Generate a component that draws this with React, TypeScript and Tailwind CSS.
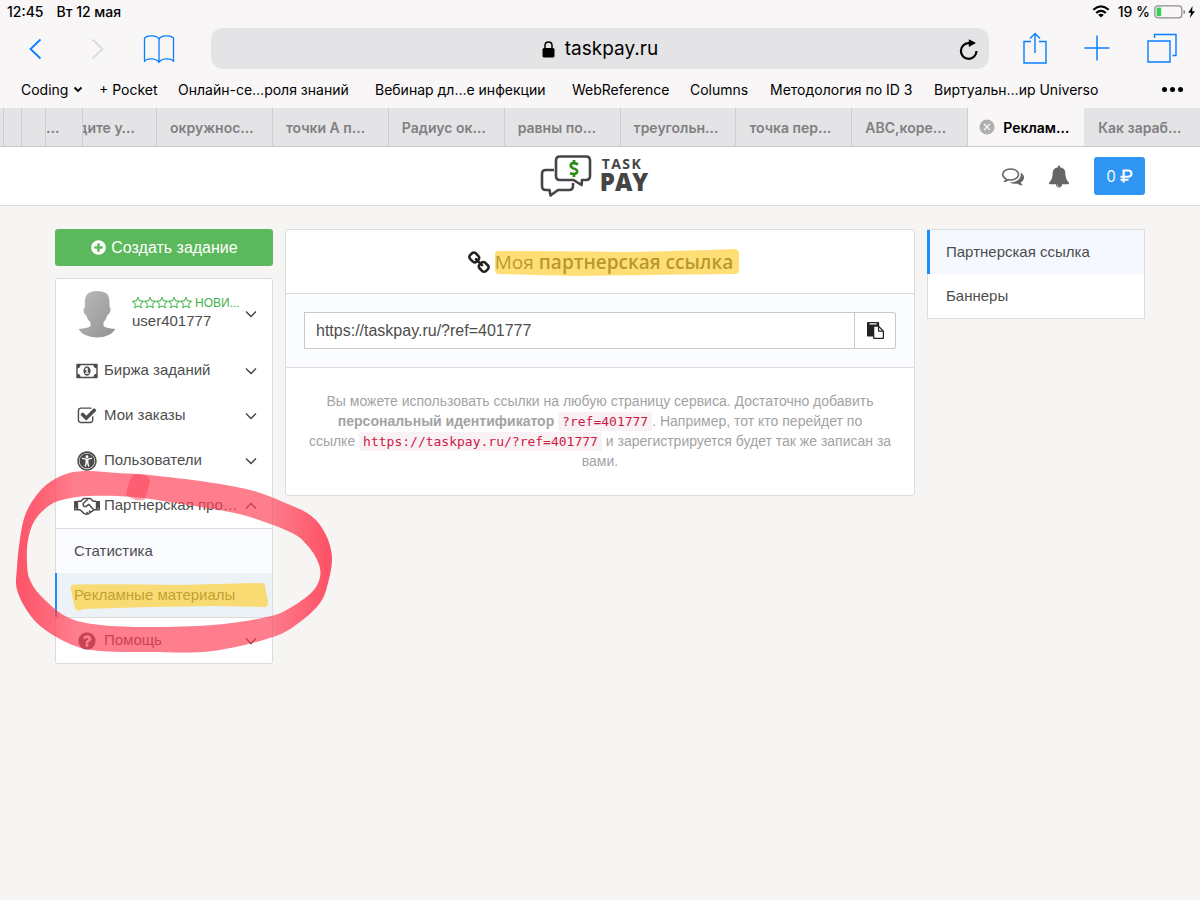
import type { ReactNode } from "react";
import { FaUniversalAccess } from "react-icons/fa";

const ICONS = {
  plus: "M1344 960v-128q0-26-19-45t-45-19h-256v-256q0-26-19-45t-45-19h-128q-26 0-45 19t-19 45v256h-256q-26 0-45 19t-19 45v128q0 26 19 45t45 19h256v256q0 26 19 45t45 19h128q26 0 45-19t19-45v-256h256q26 0 45-19t19-45zm320-64q0 209-103 385.5t-279.5 279.5-385.5 103-385.5-103-279.5-279.5-103-385.5 103-385.5 279.5-279.5 385.5-103 385.5 103 279.5 279.5 103 385.5z",
  star: "M1201 1004l306-297-422-62-189-382-189 382-422 62 306 297-73 421 378-199 377 199zm527-357q0 22-26 48l-363 354 86 500q1 7 1 20 0 50-41 50-19 0-40-12l-449-236-449 236q-22 12-40 12-21 0-31.5-14.5t-10.5-35.5q0-6 2-20l86-500-364-354q-25-27-25-48 0-37 56-46l502-73 225-455q19-41 49-41t49 41l225 455 502 73q56 9 56 46z",
  check: "M1472 930v318q0 119-84.5 203.5t-203.5 84.5h-832q-119 0-203.5-84.5t-84.5-203.5v-832q0-119 84.5-203.5t203.5-84.5h832q63 0 117 25 15 7 18 23 3 17-9 29l-49 49q-10 10-23 10-3 0-9-2-23-6-45-6h-832q-66 0-113 47t-47 113v832q0 66 47 113t113 47h832q66 0 113-47t47-113v-254q0-13 9-22l64-64q10-10 23-10 6 0 12 3 20 8 20 29zm231-489l-814 814q-24 24-57 24t-57-24l-430-430q-24-24-24-57t24-57l110-110q24-24 57-24t57 24l263 263 647-647q24-24 57-24t57 24l110 110q24 24 24 57t-24 57z",
  money: "M768 1152h384v-96h-128v-448h-114l-148 137 77 80q42-37 55-57h2v288h-128v96zm512-256q0 70-21 142t-59.5 134-101.5 101-138 39-138-39-101.5-101-59.5-134-21-142 21-142 59.5-134 101.5-101 138-39 138 39 101.5 101 59.5 134 21 142zm512 256v-512q-106 0-181-75t-75-181h-1152q0 106-75 181t-181 75v512q106 0 181 75t75 181h1152q0-106 75-181t181-75zm128-832v1152q0 26-19 45t-45 19h-1792q-26 0-45-19t-19-45v-1152q0-26 19-45t45-19h1792q26 0 45 19t19 45z",
  question: "M1024 1376v-192q0-14-9-23t-23-9h-192q-14 0-23 9t-9 23v192q0 14 9 23t23 9h192q14 0 23-9t9-23zm256-672q0-88-55.5-163t-138.5-116-170-41q-243 0-371 213-15 24 8 42l132 100q7 6 19 6 16 0 25-12 53-68 86-92 34-24 86-24 48 0 85.5 26t37.5 59q0 38-20 61t-68 45q-63 28-115.5 86.5t-52.5 125.5v36q0 14 9 23t23 9h192q14 0 23-9t9-23q0-19 21.5-49.5t54.5-49.5q32-18 49-28.5t46-35 44.5-48 28-60.5 12.5-81zm384 192q0 209-103 385.5t-279.5 279.5-385.5 103-385.5-103-279.5-279.5-103-385.5 103-385.5 279.5-279.5 385.5-103 385.5 103 279.5 279.5 103 385.5z",
  bell: "M912 1696q0-16-16-16-59 0-101.5-42.5t-42.5-101.5q0-16-16-16t-16 16q0 73 51.5 124.5t124.5 51.5q16 0 16-16zm816-288q0 52-38 90t-90 38h-448q0 106-75 181t-181 75-181-75-75-181h-448q-52 0-90-38t-38-90q50-42 91-88t85-119.5 74.5-158.5 50-206 19.5-260q0-152 117-282.5t307-158.5q-8-19-8-39 0-40 28-68t68-28 68 28 28 68q0 20-8 39 190 28 307 158.5t117 282.5q0 139 19.5 260t50 206 74.5 158.5 85 119.5 91 88z",
  comments: "M704 384q-153 0-286 52t-211.5 141-78.5 191q0 82 53 158t149 132l97 56-35 84q34-20 62-39l44-31 53 10q78 14 153 14 153 0 286-52t211.5-141 78.5-191-78.5-191-211.5-141-286-52zm0-128q191 0 353.5 68.5t256.5 186.5 94 257-94 257-256.5 186.5-353.5 68.5q-86 0-176-16-124 88-278 128-36 9-86 16h-3q-11 0-20.5-8t-11.5-21q-1-3-1-6.5t.5-6.5 2-6l2.5-5 3.5-5.5 4-5 4.5-5 4-4.5q5-6 23-25t26-29.5 22.5-29 25-38.5 20.5-44q-124-72-195-177t-71-224q0-139 94-257t256.5-186.5 353.5-68.5zm822 1169q10 24 20.5 44t25 38.5 22.5 29 26 29.5 23 25q1 1 4 4.5t4.5 5 4 5 3.5 5.5l2.5 5 2 6 .5 6.5-1 6.5q-3 14-13 22t-22 7q-50-7-86-16-154-40-278-128-90 16-176 16-271 0-472-132 58 4 88 4 161 0 309-45t264-129q125-92 192-212t67-254q0-77-23-152 129 71 204 178t75 230q0 120-71 224.5t-195 176.5z",
  link: "M1520 1216q0-40-28-68l-208-208q-28-28-68-28-42 0-72 32 3 3 19 18.5t21.5 21.5 15 19 13 25.5 3.5 27.5q0 40-28 68t-68 28q-15 0-27.5-3.5t-25.5-13-19-15-21.5-21.5-18.5-19q-33 31-33 73 0 40 28 68l206 207q27 27 68 27 40 0 68-26l147-146q28-28 28-67zm-703-705q0-40-28-68l-206-207q-28-28-68-28-39 0-68 27l-147 146q-28 28-28 67 0 40 28 68l208 208q27 27 68 27 42 0 72-31-3-3-19-18.5t-21.5-21.5-15-19-13-25.5-3.5-27.5q0-40 28-68t68-28q15 0 27.5 3.5t25.5 13 19 15 21.5 21.5 18.5 19q33-31 33-73zm895 705q0 120-85 203l-147 146q-83 83-203 83-121 0-204-85l-206-207q-83-83-83-203 0-123 88-209l-88-88q-86 88-208 88-120 0-204-84l-208-208q-84-84-84-204t85-203l147-146q83-83 203-83 121 0 204 85l206 207q83 83 83 203 0 123-88 209l88 88q86-88 208-88 120 0 204 84l208 208q84 84 84 204z",
  paste: "M768 1664h896v-640h-416q-40 0-68-28t-28-68v-416h-384v1152zm256-1440v-64q0-13-9.5-22.5t-22.5-9.5h-704q-13 0-22.5 9.5t-9.5 22.5v64q0 13 9.5 22.5t22.5 9.5h704q13 0 22.5-9.5t9.5-22.5zm256 672h299l-299-299v299zm512 128v672q0 40-28 68t-68 28h-960q-40 0-68-28t-28-68v-160h-544q-40 0-68-28t-28-68v-1344q0-40 28-68t68-28h1088q40 0 68 28t28 68v328q21 13 36 28l408 408q28 28 48 76t20 88z",
};

function Icon({ name, className, box = "0 0 1792 1792" }: { name: keyof typeof ICONS; className?: string; box?: string }) {
  return (
    <svg viewBox={box} fill="currentColor" className={className} aria-hidden="true">
      <path d={ICONS[name]} />
    </svg>
  );
}

function Handshake() {
  return (
    <svg viewBox="0 0 26 18" className="h-[18px] w-[26px]" fill="none" stroke="currentColor" strokeWidth="1.5" strokeLinejoin="round" aria-hidden="true">
      <path d="M0 4H4.200V13.500H0ZM21.800 4H26V13.500H21.800Z" fill="currentColor" stroke="none" />
      <path d="M4 4.300H7L9.500 1.500H16.500L19.200 4.300H22M4 12.800H6L10 16.400Q12 17.800 14.200 16.800L20 12.800H22" />
      <path d="M14 2 9.200 6.500Q8.800 9.800 11.800 9.600L14.800 7.300 19.500 12.600M13.800 16.600 12.500 15M16.500 15.300 15 13.500" />
      <path d="M1.300 11.700H2.300M23.700 11.700H24.700" stroke="#fff" strokeWidth="1" />
    </svg>
  );
}

function Ruble() {
  return (
    <svg viewBox="0 0 13 14" className="h-[14px] w-[13px]" fill="none" stroke="currentColor" strokeWidth="2.1" aria-label="₽" role="img">
      <path d="M3.600 13.500V1.500H8.200Q11.500 1.500 11.500 4.600T8.200 7.700H.5M.5 10.700H8.500" />
    </svg>
  );
}

function Chevron({ up = false }: { up?: boolean }) {
  return (
    <svg viewBox="0 0 12 8" className="h-2 w-3 shrink-0" fill="none" stroke="#444" strokeWidth="1.4" aria-hidden="true">
      <path d={up ? "M1 6.5 6 1.5 11 6.5" : "M1 1.5 6 6.5 11 1.5"} />
    </svg>
  );
}

/* Closed smooth curve through the given points. */
function smooth(p: number[][]) {
  const n = p.length;
  let d = `M${p[0][0]} ${p[0][1]}`;
  for (let i = 0; i < n; i++) {
    const a = p[(i - 1 + n) % n];
    const b = p[i];
    const c = p[(i + 1) % n];
    const e = p[(i + 2) % n];
    d += `C${b[0] + (c[0] - a[0]) / 6} ${b[1] + (c[1] - a[1]) / 6} ${c[0] - (e[0] - b[0]) / 6} ${c[1] - (e[1] - b[1]) / 6} ${c[0]} ${c[1]}`;
  }
  return d + "Z";
}

const OUTER = [[87, 471], [118, 473], [150, 475], [207, 482], [250, 490], [283, 502], [310, 515], [325, 533], [332, 557], [328, 583], [320, 603], [300, 622], [273, 637], [213, 651], [150, 652], [100, 651], [70, 644], [37, 623], [18, 593], [17, 567], [22, 527], [30, 505], [46, 485], [66, 474]];
const INNER = [[87, 496], [118, 496], [150, 499], [200, 507], [243, 515], [290, 532], [307, 545], [318, 562], [320, 577], [312, 592], [290, 608], [267, 617], [213, 625], [150, 627], [100, 625], [67, 617], [42, 597], [30, 580], [27, 563], [28, 540], [35, 520], [50, 505], [66, 499]];

function MarkerRing() {
  return (
    <svg viewBox="10 460 330 200" className="pointer-events-none absolute -left-[45px] top-[231px] h-[200px] w-[330px]" aria-hidden="true">
      <defs>
        <linearGradient id="ring" x1="10" x2="340" y1="0" y2="0" gradientUnits="userSpaceOnUse">
          <stop offset="0.02" stopColor="#ff3950" stopOpacity="0.86" />
          <stop offset="0.2" stopColor="#ff4157" stopOpacity="0.68" />
          <stop offset="0.8" stopColor="#ff4157" stopOpacity="0.68" />
          <stop offset="0.96" stopColor="#ff3950" stopOpacity="0.86" />
        </linearGradient>
      </defs>
      <path d={smooth(OUTER) + smooth(INNER)} fill="url(#ring)" fillRule="evenodd" />
      <path d="M133 475Q141 472 148 477L150 482 145 499Q139 502 133 499L126 495Q128 482 133 475Z" fill="#fb3850" fillOpacity="0.45" />
    </svg>
  );
}

const BOOKMARKS = ["+ Pocket", "Онлайн-се…роля знаний", "Вебинар дл…е инфекции", "WebReference", "Columns", "Методология по ID 3", "Виртуальн…ир Universo"];
const TABS = ["окружнос…", "точки А п…", "Радиус ок…", "равны по…", "треугольн…", "точка пер…", "ABC,коре…"];

function Browser() {
  return (
    <header className="bg-[#f8f6f7] font-['Inter',sans-serif] text-black">
      <div className="flex h-[23px] items-center justify-between pl-[7px] pr-1 text-[14px] font-medium">
        <div className="flex gap-[13px]">
          <span>12:45</span>
          <span>Вт 12 мая</span>
        </div>
        <div className="flex items-center">
          <svg viewBox="0 0 18 13" className="mr-2 h-[13px] w-[18px]" fill="none" stroke="currentColor" strokeWidth="2.2" aria-hidden="true">
            <path d="M1.300 4.800Q9-2 16.700 4.800M4.200 8Q9 3.800 13.800 8" />
            <path d="M9 12.500 6.200 9.700Q9 7.600 11.800 9.700Z" fill="currentColor" stroke="none" />
          </svg>
          <span className="mr-1">19 %</span>
          <svg viewBox="0 0 42 14" className="h-[14px] w-[42px]" aria-hidden="true">
            <rect x="0.8" y="0.8" width="27" height="12" rx="3" fill="none" stroke="#8d8b8c" strokeWidth="1.2" />
            <rect x="2.6" y="2.6" width="4.6" height="8.6" rx="1" fill="#34d058" />
            <path d="M29.5 5q1.8 0 1.8 2t-1.8 2z" fill="#8d8b8c" />
            <path d="M38.500 1 34.300 7.800H37L35.800 13 41 6.200H38.200z" />
          </svg>
        </div>
      </div>

      <div className="flex h-[51px] items-center">
        <div className="flex w-[211px] shrink-0 items-center">
          <button aria-label="Назад" className="ml-7 text-[#087fff]">
            <svg viewBox="0 0 14 22" className="h-[22px] w-[14px]" fill="none" stroke="currentColor" strokeWidth="1.8"><path d="M12.5 1.5 2.5 11 12.5 20.5" /></svg>
          </button>
          <button aria-label="Вперёд" className="ml-[49px] text-[#dcdadb]">
            <svg viewBox="0 0 14 22" className="h-[22px] w-[14px]" fill="none" stroke="currentColor" strokeWidth="1.8"><path d="M1.5 1.5 11.5 11 1.5 20.5" /></svg>
          </button>
          <button aria-label="Закладки" className="ml-[38px] text-[#087fff]">
            <svg viewBox="0 0 32 30" className="h-[30px] w-8" fill="none" stroke="currentColor" strokeWidth="1.3" strokeLinejoin="round">
              <path d="M16 5.500C15 1.500 5 .5 1.500 4V27.500C4 23.500 14 24 16 28.500 18 24 28 23.500 30.500 27.500V4C27 .5 17 1.500 16 5.500ZM16 5.500V28.500" />
            </svg>
          </button>
        </div>
        <div className="relative flex h-[41px] min-w-0 flex-1 items-center justify-center rounded-xl bg-[#e4e4e6] pt-[2px] text-[19px]">
          <svg viewBox="0 0 13 17" className="mr-[10px] h-[17px] w-[13px]" aria-hidden="true">
            <rect x="0.500" y="7" width="12" height="9.500" rx="1.500" />
            <path d="M3 8V4.500Q3 1 6.500 1T10 4.500V8" fill="none" stroke="currentColor" strokeWidth="1.500" />
          </svg>
          <span>taskpay.ru</span>
          <button aria-label="Обновить" className="absolute right-[10px]">
            <svg viewBox="0 0 20 22" className="h-[22px] w-5" fill="none" stroke="currentColor" strokeWidth="2.2">
              <path d="M17.500 12A7.800 7.800 0 1 1 10 4.200H12" />
              <path d="M9.800 .2V8L17 4.100z" fill="currentColor" stroke="none" />
            </svg>
          </button>
        </div>
        <div className="flex w-[211px] shrink-0 items-center justify-between pb-[2px] pl-[34px] pr-[23px] text-[#087fff]">
          <button aria-label="Поделиться">
            <svg viewBox="0 0 24 32" className="h-8 w-6" fill="none" stroke="currentColor" strokeWidth="1.4"><path d="M8 9.500H1V31H23V9.500H16M12 21V1.500M7 6.500 12 1.500 17 6.500" /></svg>
          </button>
          <button aria-label="Новая вкладка">
            <svg viewBox="0 0 26 26" className="h-[26px] w-[26px]" fill="none" stroke="currentColor" strokeWidth="1.5"><path d="M13 .5V25.500M.5 13H25.500" /></svg>
          </button>
          <button aria-label="Все вкладки">
            <svg viewBox="0 0 30 30" className="h-[30px] w-[30px]" fill="none" stroke="currentColor" strokeWidth="1.4"><path d="M1 8H23V29H1ZM7.500 5V1.500H29V22.500H25.500" /></svg>
          </button>
        </div>
      </div>

      <nav className="grid h-[34px] grid-cols-[78px_79px_197px_197px_118px_80px_164px_1fr_auto] items-center pb-1 pl-[21px] pr-[17px] text-[14px]">
        <a href="#coding" className="flex items-center gap-[5px]">
          Coding
          <svg viewBox="0 0 10 8" className="h-2 w-[10px]" fill="none" stroke="currentColor" strokeWidth="1.8"><path d="M1.500 2.500 5 6 8.500 2.500" /></svg>
        </a>
        {BOOKMARKS.map((b) => (
          <a key={b} href="#bookmark" className="whitespace-nowrap">{b}</a>
        ))}
        <button aria-label="Ещё" className="flex gap-[3px]">
          <i className="h-[5px] w-[5px] rounded-full bg-black" />
          <i className="h-[5px] w-[5px] rounded-full bg-black" />
          <i className="h-[5px] w-[5px] rounded-full bg-black" />
        </button>
      </nav>

      <nav className="flex h-[39px] items-stretch overflow-hidden border-b border-[#c9c9cb] bg-[#e4e4e6] text-[14px] font-semibold text-[#808082]">
        <span className="w-1 shrink-0 border-r border-[#cdcdcf]" />
        <span className="w-[18px] shrink-0 border-r border-[#cdcdcf]" />
        <span className="w-6 shrink-0 border-r border-[#cdcdcf]" />
        <a href="#tab" className="flex w-[37px] shrink-0 items-center border-r border-[#cdcdcf]">…</a>
        <a href="#tab" className="flex w-[74px] shrink-0 items-center justify-end overflow-hidden whitespace-nowrap border-r border-[#cdcdcf] pr-[21px]">дите у…</a>
        {TABS.map((t) => (
          <a key={t} href="#tab" className="flex min-w-0 flex-1 items-center whitespace-nowrap border-r border-[#cdcdcf] pl-[13px]">{t}</a>
        ))}
        <div className="flex min-w-0 flex-1 items-center gap-2 whitespace-nowrap bg-[#f8f6f7] pl-[11px] pr-[3px] text-black">
          <button aria-label="Закрыть вкладку">
            <svg viewBox="0 0 16 16" className="h-4 w-4"><circle cx="8" cy="8" r="7.500" fill="#b0aeaf" /><path d="m5 5 6 6m0-6-6 6" stroke="#f8f6f7" strokeWidth="1.300" /></svg>
          </button>
          <a href="#tab">Реклам…</a>
        </div>
        <a href="#tab" className="flex min-w-0 flex-1 items-center whitespace-nowrap pl-[14px]">Как зараб…</a>
      </nav>
    </header>
  );
}

function Logo() {
  return (
    <a href="#home" aria-label="Task Pay" className="flex items-center gap-2 text-[#454545]">
      <svg viewBox="0 0 52 44" className="h-11 w-[52px]" fill="none" stroke="currentColor" strokeWidth="2.600" strokeLinejoin="round" aria-hidden="true">
        <path d="M14 16H6Q2 16 2 20V32Q2 36 6 36H9.500L10.500 41.500 18 36H29Q33 36 33 32V29" />
        <path d="M20 2.500H46Q50 2.500 50 6.500V22Q50 26 46 26H42L41.500 31 33.500 26H20Q16 26 16 22V6.500Q16 2.500 20 2.500Z" />
        <path d="M38 10.500Q34 8.300 31.300 9.800 29.500 12.500 33 14.200 38 15.500 37 18.300 35.500 21 30 19.300M34 6V8.500M34 20.500V23" stroke="#2f8a18" strokeWidth="2.700" />
      </svg>
      <span className="flex flex-col pb-1 font-['Open_Sans',sans-serif] font-bold">
        <span className="pl-[2px] text-[14px] leading-4 tracking-widest">TASK</span>
        <span className="text-[24px] font-extrabold leading-5">PAY</span>
      </span>
    </a>
  );
}

function MenuRow({ icon, label, up }: { icon: ReactNode; label: string; up?: boolean }) {
  return (
    <button className="flex h-[45px] w-full items-center pl-[17px] pr-[15px] text-left">
      <span className="mr-1 flex w-[27px] shrink-0 justify-center">{icon}</span>
      <span className="mr-1 min-w-0 flex-1 truncate">{label}</span>
      <Chevron up={up} />
    </button>
  );
}

function Sidebar() {
  return (
    <aside className="relative">
      <button className="flex h-[37px] w-full items-center justify-center gap-1 rounded-[3px] bg-[#5cb85c] text-[16px] text-white">
        <Icon name="plus" className="h-[17px] w-[17px]" />
        Создать задание
      </button>
      <nav className="mt-3 rounded-[3px] border border-[#dcdcdd] bg-white">
        <button className="flex h-[69px] w-full items-center pl-[22px] pr-[15px] text-left">
          <svg viewBox="0 0 38 48" className="mr-4 h-12 w-[38px] shrink-0" aria-hidden="true">
            <defs>
              <linearGradient id="person" x1="0" y1="0" x2="1" y2="1"><stop offset="0" stopColor="#b9bbbc" /><stop offset="1" stopColor="#909294" /></linearGradient>
            </defs>
            <path d="M13 2Q20-.5 28 3 32 5 31.500 17 33.500 18 32 22 31 25 29.500 25 28 30 25.500 32.500V36Q27 38 37.500 39 32 47.500 19 47.500 5 47 .5 39 11 38 12.500 36V32.500Q9 29 8 25 5.500 24 5.500 18.500L7 17Q5.500 4 13 2Z" fill="url(#person)" />
          </svg>
          <span className="mr-1 flex min-w-0 flex-1 flex-col pb-1">
            <span className="flex items-center text-[12px] leading-[17px] text-[#3fb049]">
              {[0, 1, 2, 3, 4].map((i) => <Icon key={i} name="star" box="64 64 1664 1664" className="h-3 w-3 shrink-0" />)}
              <span className="ml-[3px] whitespace-nowrap">НОВИ...</span>
            </span>
            <span className="text-[15px] leading-[17px]">user401777</span>
          </span>
          <Chevron />
        </button>
        <MenuRow icon={<Icon name="money" box="0 0 1920 1792" className="h-5 w-[22px]" />} label="Биржа заданий" />
        <MenuRow icon={<Icon name="check" className="h-5 w-5" />} label="Мои заказы" />
        <MenuRow icon={<FaUniversalAccess className="h-5 w-5" />} label="Пользователи" />
        <MenuRow icon={<Handshake />} label="Партнерская программа" up />
        <div className="border-y border-[#dcdcdd] bg-[#fafcff]">
          <a href="#stats" className="flex h-11 items-center pl-[18px]">Статистика</a>
          <a href="#materials" className="-ml-px flex h-11 items-center border-l-2 border-[#1e8dfa] bg-[#ecf2f6] pl-[17px]">
            <span className="relative">
              Рекламные материалы
              <svg viewBox="0 0 200 30" className="pointer-events-none absolute -left-1 -top-[2px] h-[30px] w-[200px] max-w-none" aria-hidden="true">
                <path d="M3 2.500Q60 2 110 3L190 1Q195 1 195 4L198 20Q198 26 194 25L140 24 80 25 13 27Q8 31 5 26L1 8Q0 3 3 2.500Z" fill="#ffce2b" fillOpacity="0.65" />
              </svg>
            </span>
          </a>
        </div>
        <MenuRow icon={<Icon name="question" className="h-5 w-5" />} label="Помощь" />
      </nav>
      <MarkerRing />
    </aside>
  );
}

function Code({ children }: { children: ReactNode }) {
  return <code className="rounded-[3px] bg-[#f9f2f4] px-1 py-[2px] font-['DejaVu_Sans_Mono',monospace] text-[13px] leading-4 text-[#cf1846]">{children}</code>;
}

export default function App() {
  return (
    <div className="min-h-screen bg-[#f6f5f4] font-['Liberation_Sans',sans-serif] text-[15px] text-[#4d4d4d]">
      <Browser />
      <header className="grid h-[59px] grid-cols-[1fr_auto_1fr] items-center border-b border-[#dedcdd] bg-white px-[55px]">
        <div />
        <div className="-ml-3"><Logo /></div>
        <div className="flex items-center justify-end text-[#666]">
          <button aria-label="Сообщения" className="mr-6"><Icon name="comments" className="h-[22px] w-[22px]" /></button>
          <button aria-label="Уведомления" className="mr-6"><Icon name="bell" className="h-[23px] w-[22px]" /></button>
          <button className="flex h-[38px] w-[51px] items-center justify-center gap-1 rounded-[3px] bg-[#2f96f3] font-['Open_Sans',sans-serif] text-[16px] text-white">
            0 <Ruble />
          </button>
        </div>
      </header>

      <div className="grid grid-cols-[218px_minmax(0,1fr)_218px] items-start gap-3 px-[55px] pt-[23px]">
        <Sidebar />

        <main className="rounded-[3px] border border-[#dcdcdd] bg-white">
          <h1 className="flex h-16 items-center justify-center border-b border-[#dcdcdd] pt-[2px] font-['Open_Sans',sans-serif] text-[19px] text-[#333]">
            <Icon name="link" className="mr-1 h-6 w-6 text-[#222]" />
            <span className="relative whitespace-nowrap">
              Моя <b className="font-semibold">партнерская ссылка</b>
              <svg viewBox="0 0 246 28" preserveAspectRatio="none" className="pointer-events-none absolute -left-px top-0 h-7 w-[246px] max-w-none" aria-hidden="true">
                <path d="M4 3Q60 3 130 4 190 3 240 1 245 1 245 6V22Q245 26 240 26L150 27 80 28 5 26Q1 26 1 22V6Q1 3 4 3Z" fill="#ffce2b" fillOpacity="0.65" />
              </svg>
            </span>
          </h1>
          <div className="flex border-b border-[#dcdcdd] bg-[#fafcff] p-[18px]">
            <input aria-label="Партнерская ссылка" readOnly defaultValue="https://taskpay.ru/?ref=401777" className="h-[37px] min-w-0 flex-1 border border-[#c9c9c9] bg-white px-[11px] text-[16px] text-[#4d4d4d]" />
            <button aria-label="Копировать" className="flex h-[37px] w-[41px] items-center justify-center rounded-r-[3px] border border-l-0 border-[#c9c9c9] bg-white text-[#222]">
              <Icon name="paste" className="h-[17px] w-[17px]" />
            </button>
          </div>
          <p className="px-5 pb-6 pt-[23px] text-center text-[14px] leading-5 text-[#a3a3a3]">
            Вы можете использовать ссылки на любую страницу сервиса. Достаточно добавить <b>персональный идентификатор</b> <Code>?ref=401777</Code>. Например, тот кто перейдет по ссылке{"\u00a0"}<Code>https://taskpay.ru/?ref=401777</Code> и зарегистрируется будет так же записан за вами.
          </p>
        </main>

        <nav className="border border-[#dcdcdd] bg-white">
          <a href="#link" className="-ml-px flex h-11 items-center border-l-[3px] border-[#1e8dfa] bg-[#f5f9ff] pl-4">Партнерская ссылка</a>
          <a href="#banners" className="flex h-11 items-center pl-[18px]">Баннеры</a>
        </nav>
      </div>
    </div>
  );
}
